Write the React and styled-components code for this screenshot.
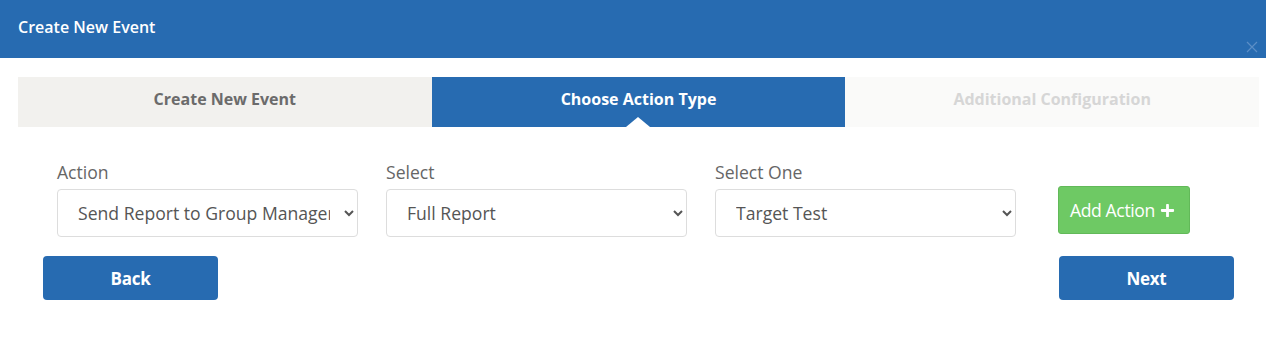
import React from 'react'
import styled, { createGlobalStyle } from 'styled-components'
import { FaPlus } from 'react-icons/fa'

const GlobalStyle = createGlobalStyle`
  body {
    margin: 0;
    background: #ffffff;
    font-family: 'Open Sans', 'Noto Sans', sans-serif;
  }
`

const Modal = styled.div`
  width: 1266px;
  background: #fff;
`

const Header = styled.div`
  position: relative;
  height: 58px;
  background: #276bb1;
  display: flex;
  align-items: center;
  padding: 0 18px;
  box-sizing: border-box;
`

const Title = styled.h4`
  margin: 0;
  color: #fff;
  font-size: 16px;
  font-weight: 600;
  line-height: 22px;
  margin-top: -4px;
`

const Close = styled.button`
  position: absolute;
  right: 8px;
  bottom: 5px;
  width: 12px;
  height: 12px;
  padding: 0;
  border: 0;
  background: transparent;
  display: flex;
  svg {
    stroke: #5b8ec6;
  }
`

const Body = styled.div`
  padding: 19px 7px 0 18px;
`

const Steps = styled.div`
  display: grid;
  grid-template-columns: 1fr 1fr 1fr;
  height: 50px;
`

const Step = styled.div`
  position: relative;
  display: flex;
  align-items: center;
  justify-content: center;
  font-size: 16px;
  font-weight: 700;
  background: ${p => (p.$state === 'active' ? '#276bb1' : p.$state === 'done' ? '#f2f1ee' : '#fafaf9')};
  color: ${p => (p.$state === 'active' ? '#fff' : p.$state === 'done' ? '#6b6b6b' : '#d6d6d6')};
  padding-bottom: 6px;
  box-sizing: border-box;
`

const Arrow = styled.span`
  position: absolute;
  bottom: 0;
  left: 50%;
  transform: translateX(-50%);
  width: 0;
  height: 0;
  border-left: 12px solid transparent;
  border-right: 12px solid transparent;
  border-bottom: 10px solid #fff;
`

const FormRow = styled.div`
  display: flex;
  align-items: flex-end;
  gap: 28px;
  padding: 34px 0 0 39px;
`

const Field = styled.div`
  display: flex;
  flex-direction: column;
  width: 301px;
`

const Label = styled.label`
  font-size: 17.6px;
  line-height: 22px;
  color: #666;
  margin-bottom: 6px;
`

const Select = styled.select`
  height: 48px;
  width: 100%;
  box-sizing: border-box;
  border: 1px solid #ddd;
  border-radius: 4px;
  background: #fff;
  color: #555;
  font-family: 'Open Sans', 'Noto Sans', sans-serif;
  font-size: 17.6px;
  padding: 0 11px 0 16px;
  outline: none;
`

const AddButton = styled.button`
  margin-left: 14px;
  margin-bottom: 3px;
  height: 48px;
  padding: 0 14px 0 11px;
  display: flex;
  align-items: center;
  gap: 5px;
  background: #6ec964;
  border: 1px solid #62b959;
  border-radius: 3px;
  color: #fff;
  font-family: 'Open Sans', 'Noto Sans', sans-serif;
  font-size: 17.6px;
  letter-spacing: -0.4px;
`

const Footer = styled.div`
  display: flex;
  justify-content: space-between;
  padding: 19px 25px 0 25px;
`

const NavButton = styled.button`
  width: 175px;
  height: 44px;
  background: #276bb1;
  border: 0;
  border-radius: 4px;
  color: #fff;
  font-family: 'Open Sans', 'Noto Sans', sans-serif;
  font-size: 17px;
  font-weight: 700;
  letter-spacing: -0.3px;
`

const steps = [
  { label: 'Create New Event', state: 'done' },
  { label: 'Choose Action Type', state: 'active' },
  { label: 'Additional Configuration', state: 'todo' },
]

export default function App() {
  return (
    <Modal>
      <GlobalStyle />
      <Header>
        <Title>Create New Event</Title>
        <Close aria-label="Close">
          <svg width="12" height="12" viewBox="0 0 12 12" fill="none" strokeWidth="1.2">
            <path d="M1 1L11 11M11 1L1 11" />
          </svg>
        </Close>
      </Header>
      <Body>
        <Steps>
          {steps.map(s => (
            <Step key={s.label} $state={s.state}>
              {s.label}
              {s.state === 'active' && <Arrow />}
            </Step>
          ))}
        </Steps>
        <FormRow>
          <Field>
            <Label>Action</Label>
            <Select defaultValue="group">
              <option value="group">Send Report to Group Manager</option>
            </Select>
          </Field>
          <Field>
            <Label>Select</Label>
            <Select defaultValue="full">
              <option value="full">Full Report</option>
            </Select>
          </Field>
          <Field>
            <Label>Select One</Label>
            <Select defaultValue="target">
              <option value="target">Target Test</option>
            </Select>
          </Field>
          <AddButton>
            Add Action <FaPlus size={15} />
          </AddButton>
        </FormRow>
        <Footer>
          <NavButton>Back</NavButton>
          <NavButton>Next</NavButton>
        </Footer>
      </Body>
    </Modal>
  )
}
